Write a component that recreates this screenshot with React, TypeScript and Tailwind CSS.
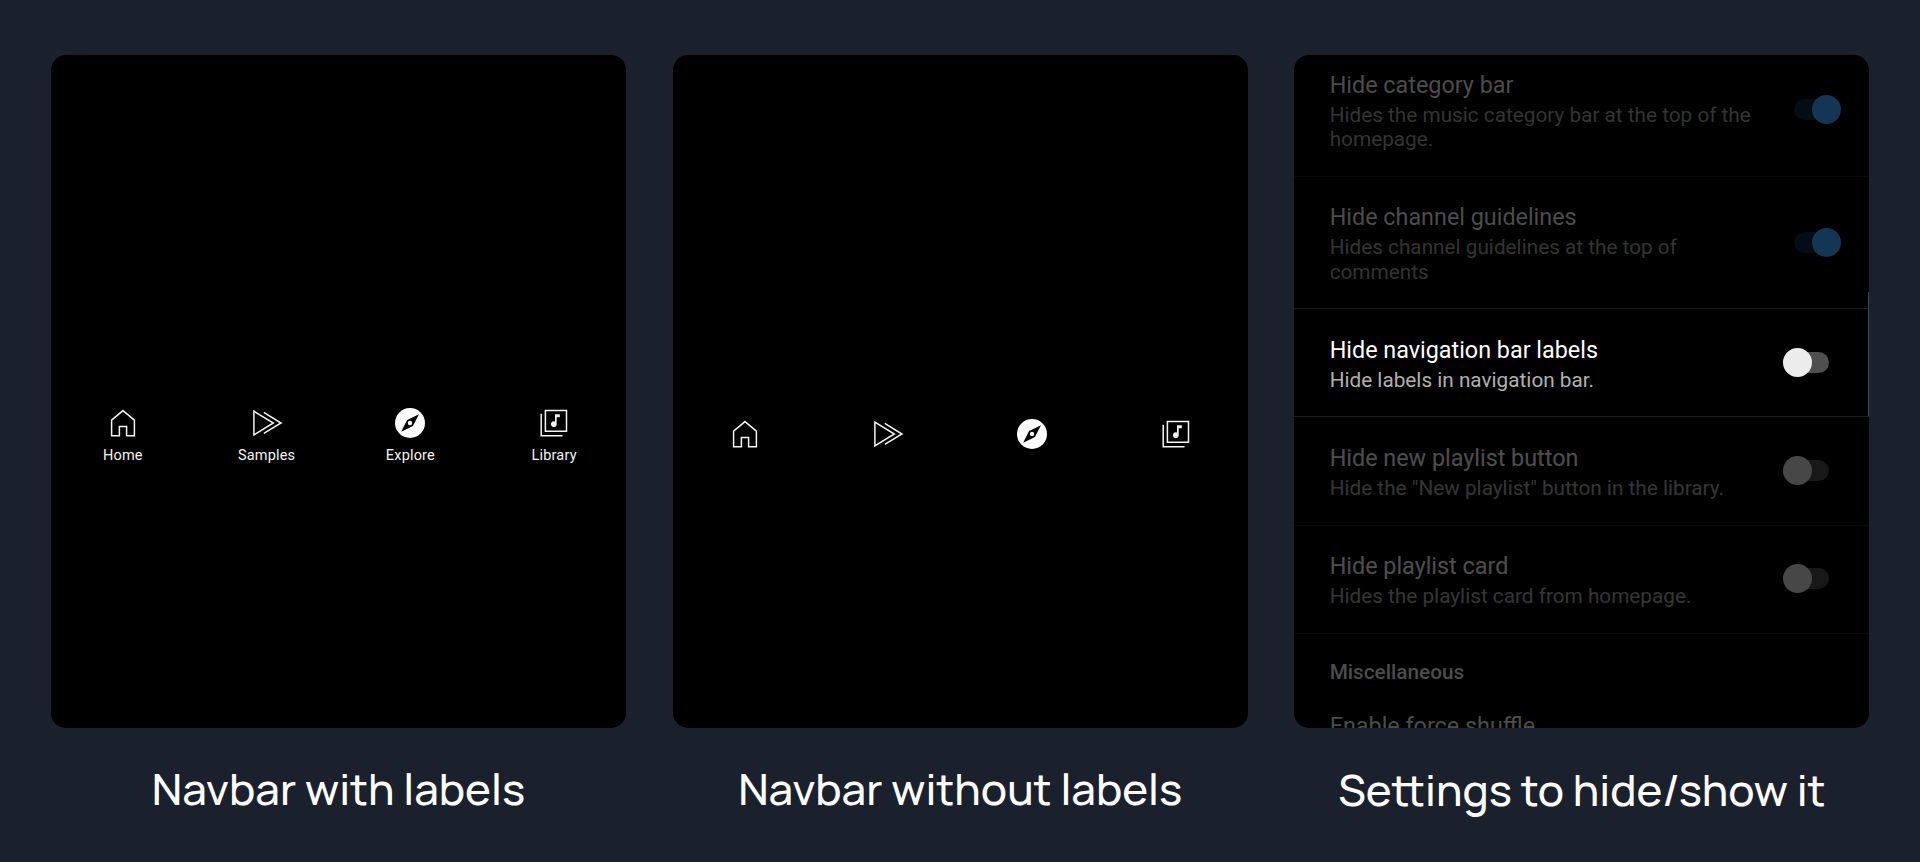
import React from "react";

const HomeIcon = () => (
  <svg width="32" height="32" viewBox="0 0 32 32" fill="none" stroke="#f4f4f4" strokeWidth="1.5">
    <path d="M16 3.6 27.4 13.2V28.8H19.6V19.6H12.4V28.8H4.6V13.2Z" />
  </svg>
);

const SamplesIcon = () => (
  <svg width="32" height="32" viewBox="0 0 32 32" fill="none" stroke="#f4f4f4" strokeWidth="1.5">
    <path d="M2.9 4.2V27.9L22.3 16Z" />
    <path d="M12.8 5.4 30 16 12.8 26.4" />
  </svg>
);

const ExploreIcon = () => (
  <svg width="32" height="32" viewBox="0 0 32 32">
    <circle cx="16" cy="16" r="15" fill="#fff" />
    <path d="M25 7.2 18.9 18.9 7.2 24.8 13.1 13.1Z" fill="#000" />
    <circle cx="16" cy="16" r="2.2" fill="#fff" />
  </svg>
);

const LibraryIcon = () => (
  <svg width="32" height="32" viewBox="0 0 32 32" fill="none" stroke="#f4f4f4" strokeWidth="1.5">
    <path d="M7.4 3.5H28.5V24.3H7.4Z" />
    <path d="M3.2 6.7V28.7H24.5" />
    <path d="M17 7.2h4.8v3H18.7v7a2.9 2.9 0 1 1-1.7-2.6Z" fill="#f4f4f4" stroke="none" />
  </svg>
);

const tabs = [
  { label: "Home", Icon: HomeIcon },
  { label: "Samples", Icon: SamplesIcon },
  { label: "Explore", Icon: ExploreIcon },
  { label: "Library", Icon: LibraryIcon },
];

function Navbar({ labels }: { labels: boolean }) {
  return (
    <nav className="grid w-full grid-cols-4">
      {tabs.map(({ label, Icon }) => (
        <div key={label} className="flex flex-col items-center">
          <Icon />
          {labels && (
            <span className="mt-[7.4px] text-[14.5px] leading-[18px] tracking-[0.17px] text-[#f4f4f4]">{label}</span>
          )}
        </div>
      ))}
    </nav>
  );
}

function Switch({ on }: { on: boolean }) {
  return on ? (
    <div className="mr-[28.4px] flex h-[21px] w-[47px] items-center justify-end rounded-full bg-[#040d15]">
      <div className="size-[29px] shrink-0 rounded-full bg-[#133654]" />
    </div>
  ) : (
    <div className="mr-[40.5px] flex h-[21px] w-[46px] items-center rounded-full bg-[#4f4f4f]">
      <div className="size-[29px] shrink-0 rounded-full bg-[#ececec]" />
    </div>
  );
}

function Row({ title, lines, on = false, active = false }: { title: string; lines: string[]; on?: boolean; active?: boolean }) {
  const height = lines.length > 1 ? "h-[132.3px]" : "h-[108.2px]";
  return (
    <div className={`relative flex shrink-0 items-center justify-between pl-[35.3px] ${height}`}>
      <div className={active || on ? "pt-[3px]" : "pt-[3px] opacity-30"}>
        <div className={`text-[23.35px] leading-7 ${on ? "text-[#4c4c4c]" : "text-white"}`}>{title}</div>
        <div className={`mt-[4px] text-[20.75px] leading-[24.5px] ${on ? "text-[#343434]" : "text-[#b0b0b0]"}`}>
          {lines.map((l) => (
            <div key={l}>{l}</div>
          ))}
        </div>
      </div>
      <div className={active || on ? "" : "opacity-30"}>
        <Switch on={on} />
      </div>
      {active && <div className="absolute -top-[16px] right-0 bottom-0 w-px bg-[#454545]" />}
    </div>
  );
}

function Divider({ strong = false }: { strong?: boolean }) {
  return <div className={strong ? "h-px shrink-0 -mb-px bg-[#1c1c1c]" : "h-px shrink-0 -mb-px bg-[#080808]"} />;
}

function Panel({ caption, captionClass, children }: { caption: string; captionClass: string; children: React.ReactNode }) {
  return (
    <section className="flex w-[575px] flex-col items-center">
      <div className="flex h-[673px] w-full flex-col overflow-hidden rounded-[15px] bg-black">{children}</div>
      <h2 className={`whitespace-nowrap font-['Manrope','Inter',sans-serif] text-[43.8px] font-medium leading-[54px] text-white ${captionClass}`}>
        {caption}
      </h2>
    </section>
  );
}

export default function App() {
  return (
    <main className="flex h-[862px] w-[1920px] justify-start gap-[46.7px] overflow-hidden bg-[#1b202d] pl-[51px] pt-[55px] font-['Roboto',sans-serif]">
      <Panel caption="Navbar with labels" captionClass="mt-[33px]">
        <div className="pt-[352.4px]">
          <Navbar labels />
        </div>
      </Panel>
      <Panel caption="Navbar without labels" captionClass="mt-[33px]">
        <div className="pt-[363px]">
          <Navbar labels={false} />
        </div>
      </Panel>
      <Panel caption="Settings to hide/show it" captionClass="mt-[34px]">
        <div className="-mt-[11.3px] flex flex-col">
          <Row title="Hide category bar" lines={["Hides the music category bar at the top of the", "homepage."]} on />
          <Divider />
          <Row title="Hide channel guidelines" lines={["Hides channel guidelines at the top of", "comments"]} on />
          <Divider strong />
          <Row title="Hide navigation bar labels" lines={["Hide labels in navigation bar."]} active />
          <Divider strong />
          <Row title="Hide new playlist button" lines={['Hide the "New playlist" button in the library.']} />
          <Divider />
          <Row title="Hide playlist card" lines={["Hides the playlist card from homepage."]} />
          <Divider />
          <div className="pl-[35.3px] pt-[25px] text-[20.75px] font-medium leading-[28px] text-[#4c4c4c]">Miscellaneous</div>
          <div className="pl-[35.3px] pt-[26px] text-[23.35px] leading-7 text-[#4c4c4c]">Enable force shuffle</div>
        </div>
      </Panel>
    </main>
  );
}
